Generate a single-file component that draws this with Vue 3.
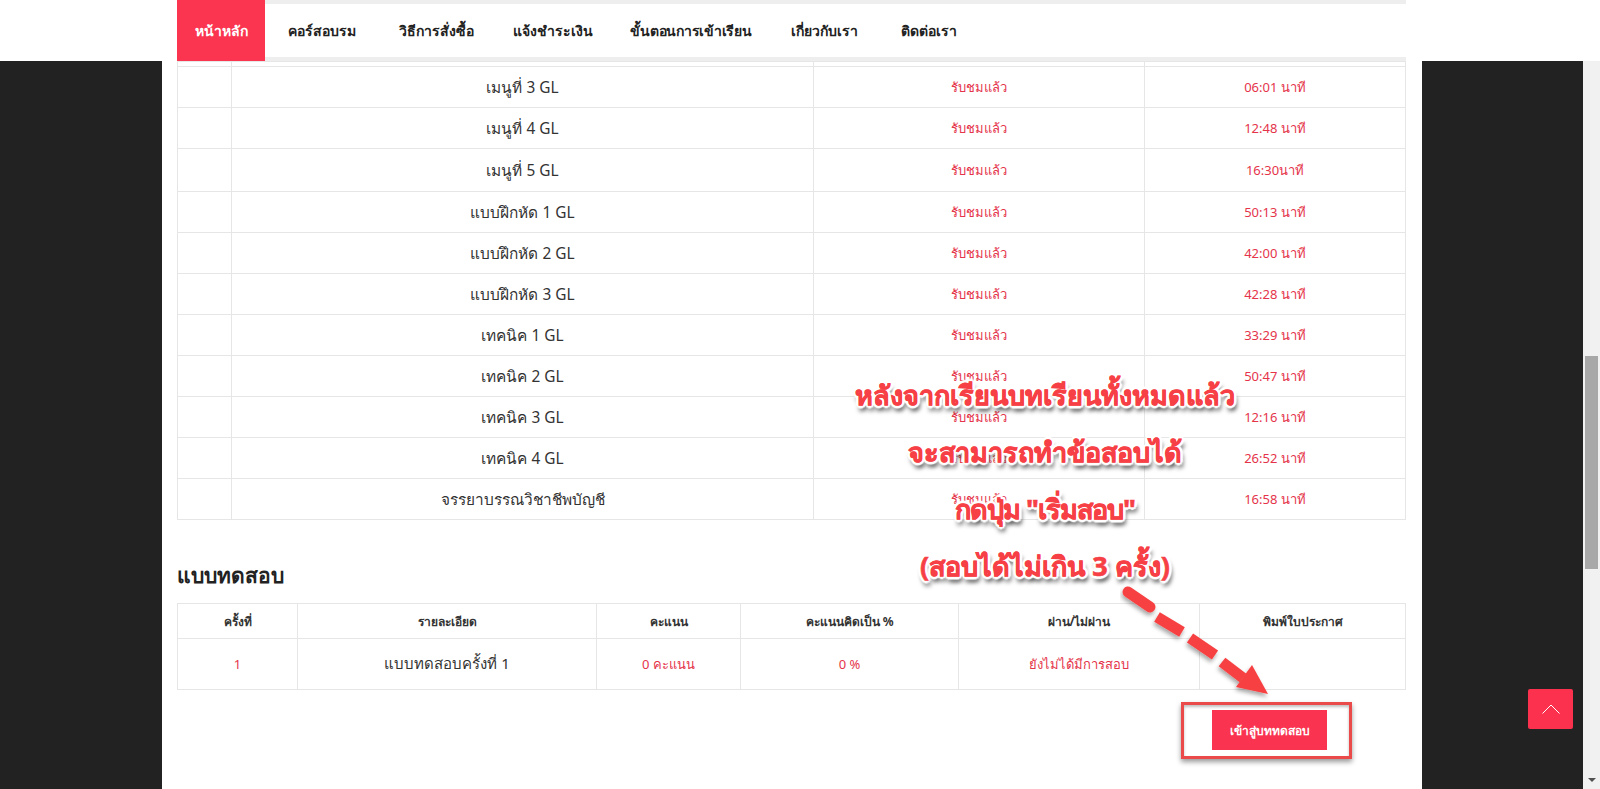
<template>
  <div class="page">
    <header class="topbar">
      <nav class="nav">
        <a class="nav-item active">หน้าหลัก</a>
        <a class="nav-item" v-for="n in navItems" :key="n">{{ n }}</a>
      </nav>
    </header>
    <main class="content">
      <table class="lessons">
        <colgroup><col class="c1" /><col class="c2" /><col class="c3" /><col class="c4" /></colgroup>
        <tbody>
          <tr class="cut"><td></td><td></td><td></td><td></td></tr>
          <tr v-for="r in lessons" :key="r[0]">
            <td></td>
            <td class="name">{{ r[0] }}</td>
            <td class="red">รับชมแล้ว</td>
            <td class="red">{{ r[1] }}</td>
          </tr>
        </tbody>
      </table>
      <h2 class="title">แบบทดสอบ</h2>
      <table class="exam">
        <colgroup><col class="e1" /><col class="e2" /><col class="e3" /><col class="e4" /><col class="e5" /><col class="e6" /></colgroup>
        <thead>
          <tr><th v-for="h in heads" :key="h">{{ h }}</th></tr>
        </thead>
        <tbody>
          <tr>
            <td class="red">1</td>
            <td class="name exam-name">แบบทดสอบครั้งที่ 1</td>
            <td class="red">0 คะแนน</td>
            <td class="red">0 %</td>
            <td class="red">ยังไม่ได้มีการสอบ</td>
            <td></td>
          </tr>
        </tbody>
      </table>
      <div class="actions"><button class="start">เข้าสู่บททดสอบ</button></div>
    </main>
    <div class="note">
      <p v-for="l in notes" :key="l">{{ l }}</p>
    </div>
    <svg class="arrow" width="170" height="130" viewBox="0 0 170 130">
      <defs><filter id="sh" x="-20%" y="-20%" width="150%" height="150%"><feDropShadow dx="-1" dy="3" stdDeviation="2" flood-color="#000" flood-opacity="0.35" /></filter></defs>
      <g filter="url(#sh)" stroke="#f74142" stroke-width="11" fill="none">
        <path d="M8 9 L30 24" stroke-linecap="round" />
        <path d="M37 34 L62 49" />
        <path d="M70 55 L95 72" />
        <path d="M102 79 L123 95" />
        <path d="M132 82 L148 111 L116 104 Z" fill="#f74142" stroke="none" />
      </g>
    </svg>
    <div class="hl"></div>
    <a class="totop">
      <svg width="18" height="10" viewBox="0 0 18 10"><path d="M0.5 9.5 L9 1 L17.5 9.5" fill="none" stroke="#fff" stroke-width="1" /></svg>
    </a>
    <div class="sb">
      <i class="up"></i><b class="thumb"></b><i class="down"></i>
    </div>
  </div>
</template>

<script setup>
const navItems = ['คอร์สอบรม', 'วิธีการสั่งซื้อ', 'แจ้งชำระเงิน', 'ขั้นตอนการเข้าเรียน', 'เกี่ยวกับเรา', 'ติดต่อเรา']
const lessons = [
  ['เมนูที่ 3 GL', '06:01 นาที'],
  ['เมนูที่ 4 GL', '12:48 นาที'],
  ['เมนูที่ 5 GL', '16:30นาที'],
  ['แบบฝึกหัด 1 GL', '50:13 นาที'],
  ['แบบฝึกหัด 2 GL', '42:00 นาที'],
  ['แบบฝึกหัด 3 GL', '42:28 นาที'],
  ['เทคนิค 1 GL', '33:29 นาที'],
  ['เทคนิค 2 GL', '50:47 นาที'],
  ['เทคนิค 3 GL', '12:16 นาที'],
  ['เทคนิค 4 GL', '26:52 นาที'],
  ['จรรยาบรรณวิชาชีพบัญชี', '16:58 นาที']
]
const heads = ['ครั้งที่', 'รายละเอียด', 'คะแนน', 'คะแนนคิดเป็น %', 'ผ่าน/ไม่ผ่าน', 'พิมพ์ใบประกาศ']
const notes = ['หลังจากเรียนบทเรียนทั้งหมดแล้ว', 'จะสามารถทำข้อสอบได้', 'กดปุ่ม "เริ่มสอบ"', '(สอบได้ไม่เกิน 3 ครั้ง)']
</script>

<style scoped>
.page {
  position: relative;
  width: 1600px;
  height: 789px;
  overflow: hidden;
  background: #222;
  font-family: "Noto Sans", "Open Sans", sans-serif;
  color: #222;
}
.topbar {
  height: 61px;
  background: #fff;
  padding: 0 194px 0 177px;
  box-sizing: border-box;
  position: relative;
  z-index: 2;
}
.nav {
  height: 61px;
  box-sizing: border-box;
  display: flex;
  width: 1229px;
  border-top: 4px solid #eee;
  border-bottom: 4px solid #eee;
}
.nav-item {
  display: flex;
  align-items: center;
  font-size: 14px;
  font-weight: 700;
  color: #222;
}
.nav-item.active {
  background: #fb3450;
  color: #fff;
  height: 61px;
  margin: -4px 23px -4px 0;
  width: 88px;
  justify-content: center;
}
.nav-item:nth-child(2) { margin-right: 42.6px; }
.nav-item:nth-child(3) { margin-right: 39.5px; }
.nav-item:nth-child(4) { margin-right: 37.4px; }
.nav-item:nth-child(5) { margin-right: 39.5px; letter-spacing: -0.25px; }
.nav-item:nth-child(6) { margin-right: 43px; }
.content {
  width: 1260px;
  height: 728px;
  margin-left: 162px;
  background: #fff;
  box-sizing: border-box;
  padding: 0 16px 0 15px;
}
table {
  border-collapse: collapse;
  table-layout: fixed;
  width: 1229px;
}
td, th { border: 1px solid #e6e6e6; text-align: center; padding: 0; }
.lessons tr { height: 41px; }
.lessons tr.cut { height: 5px; }
.lessons tr:nth-child(4) { height: 43px; }
.c1 { width: 54px; }
.c2 { width: 582px; }
.c3 { width: 331px; }
.name { font-size: 15.4px; color: #333; }
.exam-name { font-size: 15px; }
.red { font-size: 13px; color: #e5344a; }
.title {
  margin: 40px 0 13px;
  font-size: 21px;
  line-height: 30px;
  font-weight: 700;
  color: #222;
}
.e1 { width: 120px; }
.e2 { width: 299px; }
.e3 { width: 144px; }
.e4 { width: 218px; }
.e5 { width: 241px; }
.exam thead tr { height: 35px; }
.exam tbody tr { height: 51px; }
th { font-size: 12px; font-weight: 700; color: #333; }
.actions { display: flex; justify-content: flex-end; padding: 20px 79px 0 0; }
.start {
  width: 115px;
  height: 40px;
  border: 0;
  background: #f93350;
  color: #fff;
  font: 700 12px "Noto Sans", sans-serif;
}
.note {
  position: absolute;
  left: 850px;
  top: 372px;
  width: 390px;
  text-align: center;
  color: #f64045;
  font-size: 27px;
  font-weight: 700;
  white-space: nowrap;
  -webkit-text-stroke: 0.6px #f64045;
  text-shadow:
    -3px 0 1px #fff, 3px 0 1px #fff, 0 -3px 1px #fff, 0 3px 1px #fff,
    -2px -2px 1px #fff, 2px 2px 1px #fff, -2px 2px 1px #fff, 2px -2px 1px #fff,
    3px 5px 4px rgba(0,0,0,.6), 0 6px 4px rgba(0,0,0,.35);
}
.note p { margin: 0; height: 57px; line-height: 46px; }
.note p:nth-child(3) { letter-spacing: -1px; }
.arrow { position: absolute; left: 1120px; top: 583px; }
.hl {
  position: absolute;
  left: 1181px;
  top: 702px;
  width: 171px;
  height: 57px;
  box-sizing: border-box;
  border: 3px solid #ea4a4a;
  box-shadow: 0 3px 5px rgba(0,0,0,.4), inset 0 2px 3px rgba(0,0,0,.25);
}
.totop {
  position: absolute;
  left: 1528px;
  top: 689px;
  width: 45px;
  height: 40px;
  background: #fb314e;
  border-radius: 2px;
  display: flex;
  align-items: center;
  justify-content: center;
}
.sb {
  position: absolute;
  right: 0;
  top: 0;
  width: 17px;
  height: 789px;
  background: #f1f1f1;
}
.thumb { position: absolute; left: 2px; top: 356px; width: 13px; height: 213px; background: #a8a8a8; }
.up, .down { position: absolute; left: 5px; width: 0; height: 0; border-left: 4px solid transparent; border-right: 4px solid transparent; }
.up { top: 7px; border-bottom: 4px solid #505050; }
.down { bottom: 7px; border-top: 4px solid #505050; }
</style>
